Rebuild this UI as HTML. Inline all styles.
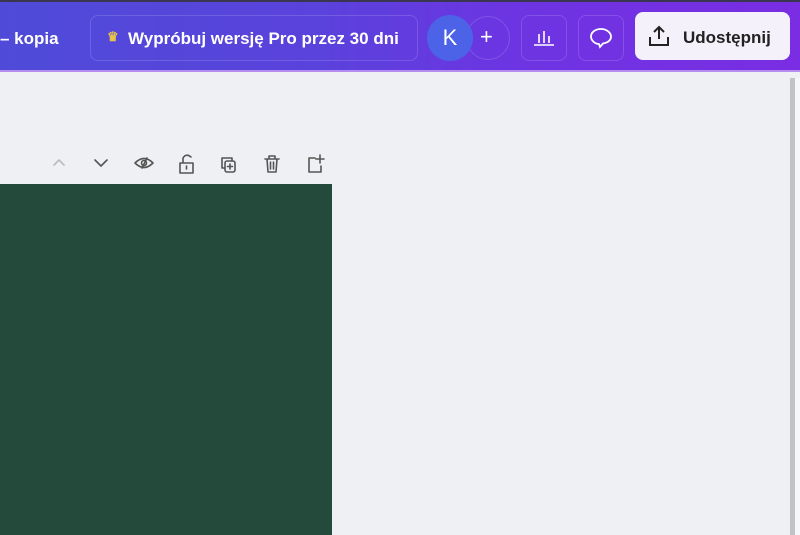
<!DOCTYPE html>
<html><head><meta charset="utf-8"><style>
*{margin:0;padding:0;box-sizing:border-box}
body{width:800px;height:535px;overflow:hidden;background:#eef0f4;font-family:"Liberation Sans",sans-serif;position:relative}
.hdr{position:absolute;left:0;top:0;width:800px;height:70px;background:linear-gradient(90deg,#4f4bd8 0%,#5a42dc 40%,#6d34e2 65%,#7a2de2 100%);border-top:2px solid #3a3550}
.hdr:after{content:"";position:absolute;left:0;right:0;bottom:-2px;height:2px;background:#b58cf0}
.t{position:absolute;color:#fff;font-weight:bold;font-size:17px}
.pro{position:absolute;left:90px;top:13px;width:328px;height:46px;border:1px solid rgba(255,255,255,.15);border-radius:8px}
.btn{position:absolute;top:13px;width:46px;height:46px;border:1px solid rgba(255,255,255,.15);border-radius:8px}
.share{position:absolute;left:635px;top:12px;width:155px;height:48px;background:#f4f1fb;border-radius:8px}
.green{position:absolute;left:0;top:184px;width:332px;height:351px;background:#234a3a}
.ic{position:absolute;top:150px}
</style></head><body>
<div class="hdr">
<div class="t" style="left:0;top:27px">– kopia</div>
<div class="pro"></div>
<div class="t" style="left:107px;top:27px;font-size:13px;color:#e8c54a">♛</div>
<div class="t" style="left:128px;top:27px">Wypróbuj wersję Pro przez 30 dni</div>
<div style="position:absolute;left:466px;top:14px;width:44px;height:44px;border-radius:50%;border:1px solid rgba(255,255,255,.15)"></div>
<div style="position:absolute;left:427px;top:13px;width:46px;height:46px;border-radius:50%;background:#4c63e8;color:#fff;font-size:22px;text-align:center;line-height:46px">K</div>
<div class="t" style="left:480px;top:22px;font-size:22px;font-weight:normal">+</div>
<div class="btn" style="left:521px"></div>
<svg style="position:absolute;left:532px;top:25px" width="24" height="20" fill="none" stroke="#fff" stroke-width="1.6"><path d="M2 18H22M7 16V7M12 16V4M17 16V9"/></svg>
<div class="btn" style="left:578px"></div>
<svg style="position:absolute;left:588px;top:24px" width="26" height="24" fill="none" stroke="#fff" stroke-width="1.8"><path d="M13 3C7 3 3 6.5 3 10.5S7 18 11 18L12 21L15 17.5C20 16.5 23 14 23 10.5S19 3 13 3Z"/></svg>
</div>
<div class="share">
<svg style="position:absolute;left:12px;top:12px" width="24" height="24" fill="none" stroke="#222" stroke-width="2"><path d="M12 15V3M7 8L12 3L17 8M3 13V21H21V13"/></svg>
<div style="position:absolute;left:48px;top:16px;font-weight:bold;font-size:17px;color:#222">Udostępnij</div>
</div>
<svg class="ic" style="left:50px" width="280" height="26" fill="none" stroke="#555" stroke-width="1.6" stroke-linecap="round" stroke-linejoin="round">
<path d="M4 15L9 10L14 15" stroke="#bbb"/>
<path d="M45 10L51 16L57 10"/>
<path d="M85 13Q94 4 103 13Q94 22 85 13Z M92 18L97 8"/><circle cx="94" cy="13" r="2.5"/>
<path d="M130 13H143V23H130Z M133 13V8Q136 3 141 7"/><path d="M136.5 16V19"/>
<path d="M172 8H182V11 M172 8V18H175"/><rect x="175" y="11" width="10" height="11" rx="2"/><path d="M180 14V19M177.5 16.5H182.5"/>
<path d="M215 9H229M219 9V6H225V9M217 9L218 22H226L227 9M220.5 12V19M223.5 12V19"/>
<path d="M265 8H259V22H271V16 M270 5V13M266 9H274"/>
</svg>
<div class="green"></div>
<div style="position:absolute;left:790px;top:78px;width:5px;height:457px;background:#c0c2c6"></div>
<div style="position:absolute;left:795px;top:78px;width:5px;height:457px;background:#f6f7f9"></div>
</body></html>
